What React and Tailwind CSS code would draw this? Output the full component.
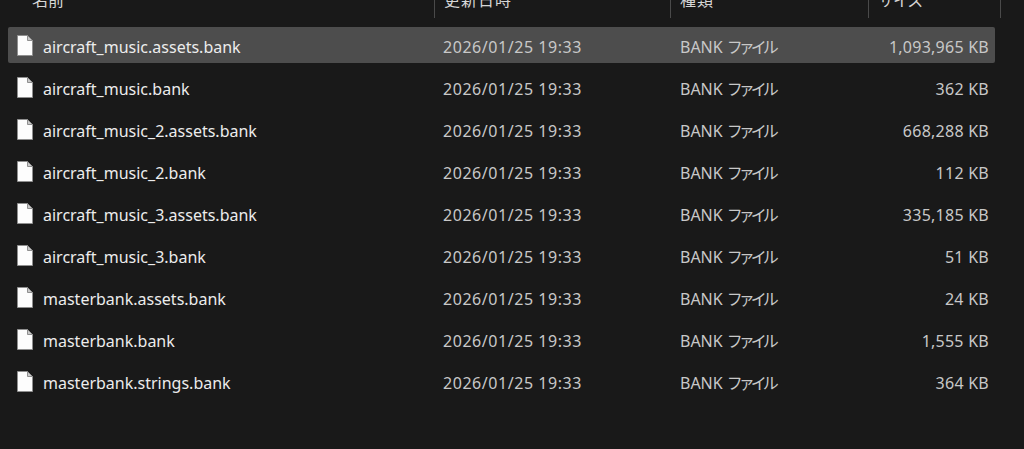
const rows = [
  ["aircraft_music.assets.bank", "1,093,965 KB"],
  ["aircraft_music.bank", "362 KB"],
  ["aircraft_music_2.assets.bank", "668,288 KB"],
  ["aircraft_music_2.bank", "112 KB"],
  ["aircraft_music_3.assets.bank", "335,185 KB"],
  ["aircraft_music_3.bank", "51 KB"],
  ["masterbank.assets.bank", "24 KB"],
  ["masterbank.bank", "1,555 KB"],
  ["masterbank.strings.bank", "364 KB"],
];

function FileIcon() {
  return (
    <svg width="18" height="23" viewBox="0 0 18 23" className="shrink-0">
      <path d="M1.5 1.5H11.5L16.5 6.5V21.5H1.5Z" fill="#fdfdfd" stroke="#8f8f8f" strokeWidth="1" />
      <path d="M11.5 1.5V6.5H16.5Z" fill="#c9c9c9" stroke="#8f8f8f" strokeWidth="1" />
    </svg>
  );
}

function HeaderCell({ label, className, textClass }) {
  return (
    <div className={"relative h-[18px] overflow-hidden border-r border-[#4a4a4a] " + className}>
      <span className={"absolute bottom-[8px] whitespace-nowrap text-[16px] leading-[20px] text-[#d6d6d6] " + textClass}>{label}</span>
    </div>
  );
}

export default function App() {
  return (
    <div className="h-[449px] w-[1024px] overflow-hidden bg-[#191919] font-['Noto_Sans','Noto_Sans_CJK_JP',sans-serif]">
      <div className="flex h-[18px]">
        <HeaderCell label="名前" className="ml-[23px] w-[412px]" textClass="left-[9px]" />
        <HeaderCell label="更新日時" className="w-[236px]" textClass="left-[9px] tracking-[1px]" />
        <HeaderCell label="種類" className="w-[198px]" textClass="left-[9px] tracking-[1px]" />
        <HeaderCell label="サイズ" className="w-[132px]" textClass="left-[9px] tracking-[-1px]" />
      </div>
      <div className="ml-2 mt-[9px] flex w-[987px] flex-col gap-[6px]">
        {rows.map(([name, size], i) => (
          <div
            key={name}
            className={
              "grid h-[36px] grid-cols-[435px_237px_1fr_auto] items-center rounded-[2px] pr-[6px] text-[16px] " +
              (i === 0 ? "bg-[#4d4d4d]" : "")
            }
          >
            <div className="flex items-center gap-[9px] pl-[8px]">
              <FileIcon />
              <span className="pt-[4px] text-[#ececec]">{name}</span>
            </div>
            <span className="pt-[4px] tracking-[0.55px] text-[#c8c8c8]">2026/01/25 19:33</span>
            <span className="pt-[4px] text-[#c8c8c8]">
              BANK <span className="tracking-[-4px]">ファイル</span>
            </span>
            <span className="pt-[4px] text-right tracking-[0.25px] text-[#c8c8c8]">{size}</span>
          </div>
        ))}
      </div>
    </div>
  );
}
